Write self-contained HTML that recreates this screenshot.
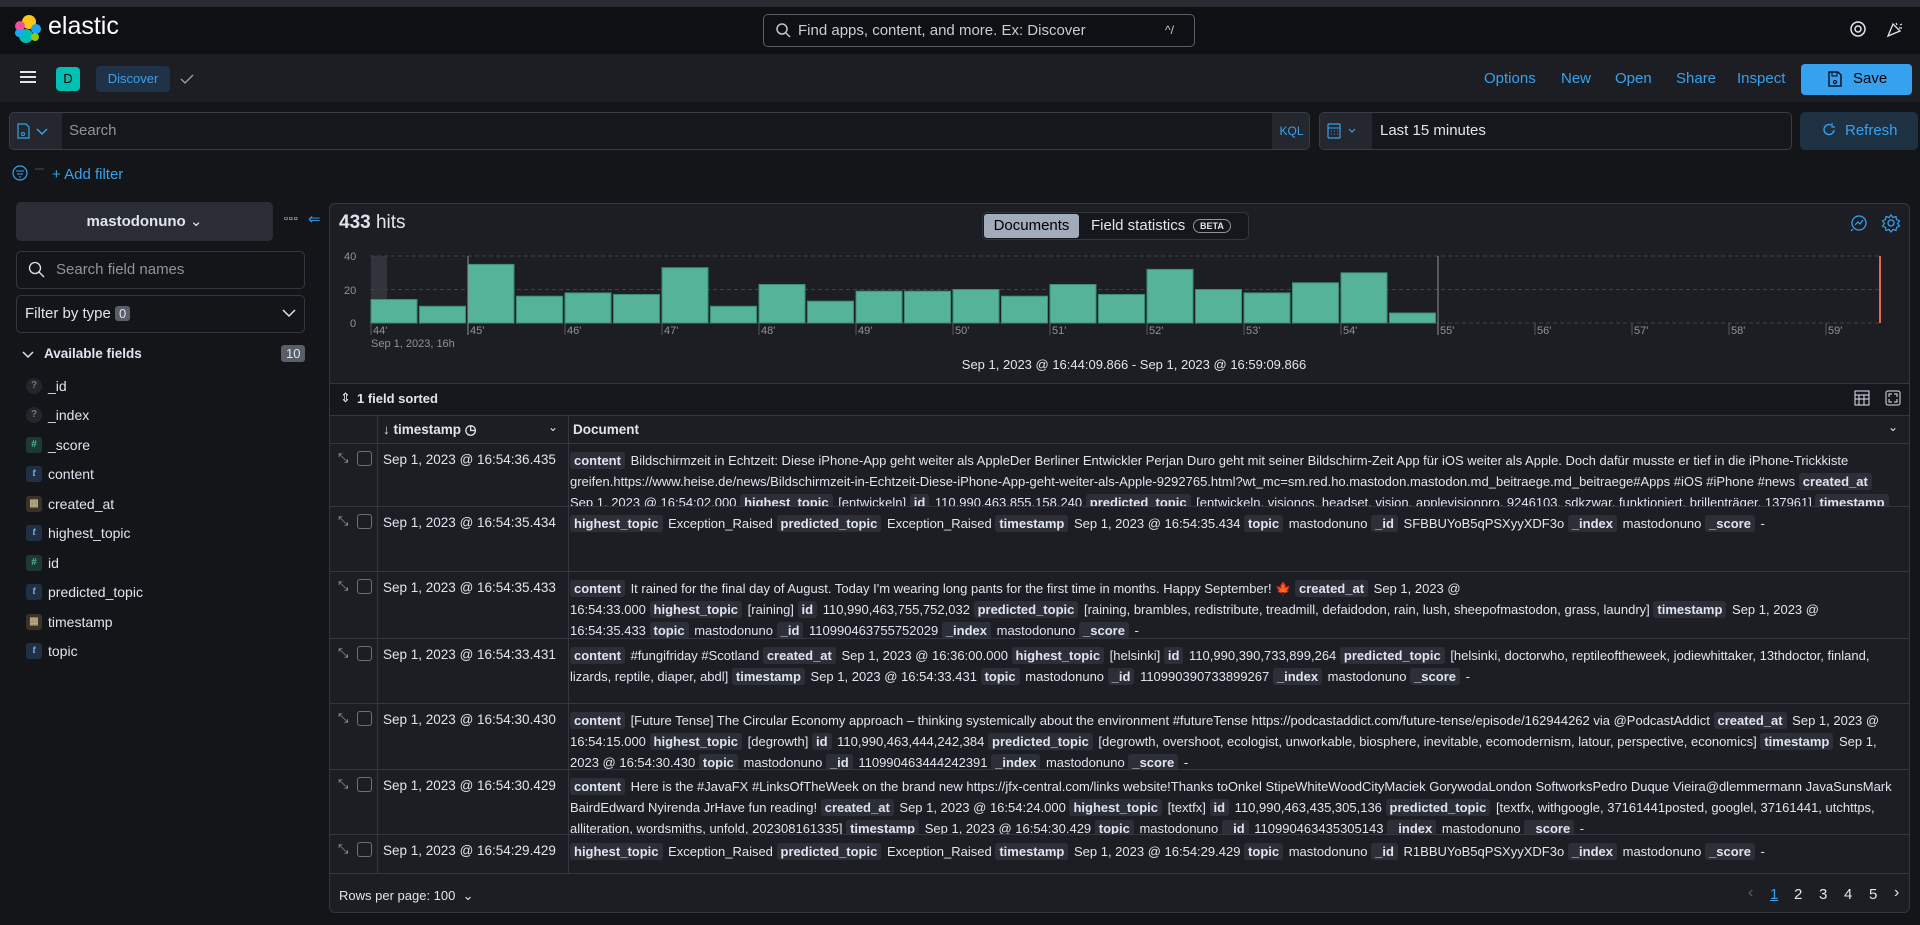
<!DOCTYPE html>
<html><head><meta charset="utf-8">
<style>
*{box-sizing:border-box;margin:0;padding:0}
body{width:1920px;height:925px;background:#141519;font-family:"Liberation Sans",sans-serif;color:#dfe5ef;position:relative;overflow:hidden;font-size:14px}
.a{position:absolute}
.blue{color:#36a2ef}
.tag{background:#2c2f38;color:#dfe5ef;font-weight:bold;padding:1px 4px;border-radius:3px;margin-right:2px}
.row{position:absolute;left:330px;width:1579px;border-top:1px solid #343741;overflow:hidden}
.row .ts{position:absolute;left:53px;top:8px;font-size:13.5px}
.row .doc{position:absolute;left:240px;top:6px;width:1322px;font-size:13px;line-height:21px}
.row .vl{position:absolute;left:238px;top:0;bottom:0;border-left:1px solid #343741}
.row .vl2{position:absolute;left:47px;top:0;bottom:0;border-left:1px solid #343741}
.cb{position:absolute;left:27px;top:7px;width:15px;height:15px;border:1px solid #6a717d;border-radius:3px}
.ex{position:absolute;left:8px;top:6px;color:#98a2b3;font-size:13px}
.fld{position:absolute;left:26px;font-size:14px;display:flex;align-items:center}
.fi{width:16px;height:16px;border-radius:3px;margin-right:6px;font-size:10px;text-align:center;line-height:16px;font-weight:bold}
</style></head><body>
<div class="a" style="left:0;top:0;width:1920px;height:7px;background:#2a2c34"></div>
<div class="a" style="left:0;top:7px;width:1920px;height:47px;background:#0f1014"></div>
<svg class="a" style="left:14px;top:14px" width="28" height="30" viewBox="0 0 28 30">
<circle cx="15" cy="8" r="7" fill="#fec514"/><circle cx="6" cy="12" r="5" fill="#f04e98"/><circle cx="22" cy="15" r="5" fill="#1ba9f5"/><circle cx="12" cy="22" r="7" fill="#00bfb3"/><circle cx="5" cy="19" r="4" fill="#1ba9f5"/><circle cx="21" cy="23" r="4" fill="#93c90e"/></svg>
<div class="a" style="left:48px;top:12px;font-size:25px;color:#fff">elastic</div>
<div class="a" style="left:763px;top:14px;width:432px;height:33px;border:1px solid #5a5e68;border-radius:5px;background:#0f1014"></div>
<svg class="a" style="left:775px;top:22px" width="16" height="16"><circle cx="7" cy="7" r="5" stroke="#c0c4cc" stroke-width="1.5" fill="none"/><line x1="11" y1="11" x2="15" y2="15" stroke="#c0c4cc" stroke-width="1.5"/></svg>
<div class="a" style="left:798px;top:22px;font-size:15px;color:#c8ccd4">Find apps, content, and more. Ex: Discover</div>
<div class="a" style="left:1165px;top:23px;font-size:12px;color:#c8ccd4">^/</div>
<svg class="a" style="left:1849px;top:20px" width="18" height="18"><circle cx="9" cy="9" r="7" stroke="#dfe5ef" stroke-width="1.5" fill="none"/><circle cx="9" cy="9" r="3" stroke="#dfe5ef" stroke-width="1.5" fill="none"/></svg>
<svg class="a" style="left:1885px;top:20px" width="18" height="18"><path d="M3 16 L8 4 L15 11 Z" stroke="#dfe5ef" stroke-width="1.3" fill="none"/><path d="M11 3l1 2M15 5l2-1M14 8h3" stroke="#dfe5ef" stroke-width="1.2"/></svg>
<div class="a" style="left:0;top:54px;width:1920px;height:48px;background:#1d1e24"></div>
<div class="a" style="left:20px;top:71px;width:16px;height:2px;background:#dfe5ef;box-shadow:0 5px 0 #dfe5ef,0 10px 0 #dfe5ef"></div>
<div class="a" style="left:56px;top:67px;width:24px;height:24px;background:#00bfb3;border-radius:4px;color:#000;text-align:center;line-height:24px;font-size:13px">D</div>
<div class="a" style="left:96px;top:66px;width:74px;height:26px;background:#1f3248;border-radius:4px;color:#36a2ef;text-align:center;line-height:26px;font-size:13px">Discover</div>
<svg class="a" style="left:180px;top:73px" width="14" height="12"><path d="M1 6l4 4 8-8" stroke="#98a2b3" stroke-width="1.3" fill="none"/></svg>
<div class="a blue" style="left:1484px;top:70px;font-size:15px">Options</div>
<div class="a blue" style="left:1561px;top:70px;font-size:15px">New</div>
<div class="a blue" style="left:1615px;top:70px;font-size:15px">Open</div>
<div class="a blue" style="left:1676px;top:70px;font-size:15px">Share</div>
<div class="a blue" style="left:1737px;top:70px;font-size:15px">Inspect</div>
<div class="a" style="left:1801px;top:64px;width:111px;height:31px;background:#36a2ef;border-radius:4px"></div>
<svg class="a" style="left:1828px;top:71px" width="14" height="16"><path d="M1 1h9l3 3v11H1z" stroke="#000" stroke-width="1.3" fill="none"/><rect x="4" y="1" width="5" height="4" stroke="#000" fill="none"/><circle cx="7" cy="11" r="1.5" stroke="#000" fill="none"/></svg>
<div class="a" style="left:1853px;top:70px;font-size:15px;color:#000">Save</div>
<div class="a" style="left:9px;top:112px;width:1301px;height:38px;border:1px solid #3a3d46;border-radius:5px;background:#16171c;overflow:hidden">
 <div class="a" style="left:0;top:0;width:52px;height:38px;background:#25272e"></div>
 <div class="a" style="left:1262px;top:0;width:39px;height:38px;background:#25272e;color:#36a2ef;font-size:12px;text-align:center;line-height:36px">KQL</div>
</div>
<svg class="a" style="left:17px;top:122px" width="34" height="18"><path d="M1 2h8l3 3v11H1z" stroke="#36a2ef" stroke-width="1.2" fill="none"/><circle cx="6" cy="12" r="1.5" stroke="#36a2ef" fill="none"/><path d="M20 7l5 5 5-5" stroke="#36a2ef" stroke-width="1.5" fill="none"/></svg>
<div class="a" style="left:69px;top:122px;font-size:15px;color:#8e939c">Search</div>
<div class="a" style="left:1319px;top:112px;width:473px;height:38px;border:1px solid #3a3d46;border-radius:5px;background:#16171c;overflow:hidden">
 <div class="a" style="left:0;top:0;width:52px;height:38px;background:#25272e"></div>
</div>
<svg class="a" style="left:1327px;top:121px" width="34" height="18"><rect x="1" y="3" width="12" height="14" rx="1" stroke="#36a2ef" stroke-width="1.2" fill="none"/><line x1="1" y1="7" x2="13" y2="7" stroke="#36a2ef"/><path d="M4 10h1M7 10h1M10 10h1M4 13h1M7 13h1M10 13h1" stroke="#36a2ef"/><path d="M22 8l3 3 3-3" stroke="#36a2ef" stroke-width="1.2" fill="none"/></svg>
<div class="a" style="left:1380px;top:122px;font-size:15px;color:#dfe5ef">Last 15 minutes</div>
<div class="a" style="left:1800px;top:112px;width:118px;height:38px;background:#1d3142;border-radius:5px"></div>
<svg class="a" style="left:1821px;top:122px" width="16" height="16"><path d="M13 8a5 5 0 1 1-3-5" stroke="#36a2ef" stroke-width="1.4" fill="none"/><path d="M11 1v4h3" stroke="#36a2ef" stroke-width="1.2" fill="none"/></svg>
<div class="a blue" style="left:1845px;top:122px;font-size:15px">Refresh</div>
<svg class="a" style="left:11px;top:164px" width="36" height="18"><circle cx="9" cy="9" r="7" stroke="#36a2ef" stroke-width="1.2" fill="none"/><path d="M5 7h8M6 10h6M8 13h2" stroke="#36a2ef"/><line x1="24" y1="5" x2="33" y2="5" stroke="#4a4d55"/></svg>
<div class="a blue" style="left:52px;top:166px;font-size:15px">+ Add filter</div>
<div class="a" style="left:16px;top:202px;width:257px;height:39px;background:#2b2d35;border-radius:5px;text-align:center;line-height:39px;font-weight:bold;font-size:15px">mastodonuno <span style="font-weight:normal">&#8964;</span></div>
<div class="a" style="left:284px;top:213px;font-size:11px;letter-spacing:1px;color:#dfe5ef">&#9643;&#9643;&#9643;</div>
<div class="a blue" style="left:308px;top:210px;font-size:15px">&#8656;</div>
<div class="a" style="left:16px;top:251px;width:289px;height:38px;border:1px solid #343741;border-radius:5px"></div>
<svg class="a" style="left:28px;top:261px" width="18" height="18"><circle cx="7" cy="7" r="5.5" stroke="#dfe5ef" stroke-width="1.3" fill="none"/><line x1="11" y1="11" x2="16" y2="16" stroke="#dfe5ef" stroke-width="1.3"/></svg>
<div class="a" style="left:56px;top:261px;font-size:15px;color:#8e939c">Search field names</div>
<div class="a" style="left:16px;top:295px;width:289px;height:38px;border:1px solid #343741;border-radius:5px"></div>
<div class="a" style="left:25px;top:305px;font-size:15px">Filter by type <span style="background:#5a5e68;padding:0 4px;border-radius:3px;font-size:13px">0</span></div>
<svg class="a" style="left:282px;top:308px" width="14" height="10"><path d="M1 2l6 6 6-6" stroke="#dfe5ef" stroke-width="1.5" fill="none"/></svg>
<svg class="a" style="left:22px;top:350px" width="12" height="10"><path d="M1 2l5 5 5-5" stroke="#dfe5ef" stroke-width="1.5" fill="none"/></svg>
<div class="a" style="left:44px;top:346px;font-size:13.5px;font-weight:bold">Available fields</div>
<div class="a" style="left:281px;top:345px;background:#5a5e68;padding:1px 5px;border-radius:3px;font-size:13px">10</div>
<div class="fld" style="top:378px"><div class="fi" style="background:#24262d;border-radius:8px;color:#777">?</div>_id</div>
<div class="fld" style="top:407px"><div class="fi" style="background:#24262d;border-radius:8px;color:#777">?</div>_index</div>
<div class="fld" style="top:437px"><div class="fi" style="background:#1c3a30;color:#54b399">#</div>_score</div>
<div class="fld" style="top:466px"><div class="fi" style="background:#1f3045;color:#7da7d9;font-style:italic">t</div>content</div>
<div class="fld" style="top:496px"><div class="fi" style="background:#3a3325;color:#b9a888">&#9638;</div>created_at</div>
<div class="fld" style="top:525px"><div class="fi" style="background:#1f3045;color:#7da7d9;font-style:italic">t</div>highest_topic</div>
<div class="fld" style="top:555px"><div class="fi" style="background:#1c3a30;color:#54b399">#</div>id</div>
<div class="fld" style="top:584px"><div class="fi" style="background:#1f3045;color:#7da7d9;font-style:italic">t</div>predicted_topic</div>
<div class="fld" style="top:614px"><div class="fi" style="background:#3a3325;color:#b9a888">&#9638;</div>timestamp</div>
<div class="fld" style="top:643px"><div class="fi" style="background:#1f3045;color:#7da7d9;font-style:italic">t</div>topic</div>
<div class="a" style="left:329px;top:203px;width:1581px;height:710px;background:#1d1e24;border:1px solid #343741;border-radius:6px"></div>
<div class="a" style="left:339px;top:212px;font-size:19px"><b>433</b> hits</div>
<div class="a" style="left:982px;top:212px;width:267px;height:28px;border:1px solid #343741;border-radius:5px;background:#16171c"></div>
<div class="a" style="left:984px;top:214px;width:95px;height:24px;background:#a2abba;border-radius:3px;color:#000;text-align:center;line-height:24px;font-size:15px">Documents</div>
<div class="a" style="left:1091px;top:217px;font-size:15px">Field statistics</div>
<div class="a" style="left:1193px;top:219px;font-size:9px;font-weight:bold;border:1px solid #8e939c;border-radius:9px;padding:1px 6px">BETA</div>
<svg class="a" style="left:1849px;top:213px" width="20" height="20"><circle cx="10" cy="10" r="7" stroke="#36a2ef" stroke-width="1.3" fill="none"/><path d="M6 12l3-3 2 2 3-4M4 16l-2 2" stroke="#36a2ef" stroke-width="1.2" fill="none"/></svg>
<svg class="a" style="left:1881px;top:213px" width="20" height="20"><circle cx="10" cy="10" r="3" stroke="#36a2ef" stroke-width="1.3" fill="none"/><path d="M10 2l2 2.5 3-1 .5 3 3 1.5-2 2.5 2 2.5-3 1.5-.5 3-3-1-2 2.5-2-2.5-3 1-.5-3-3-1.5 2-2.5-2-2.5 3-1.5.5-3 3 1z" stroke="#36a2ef" stroke-width="1.2" fill="none"/></svg>
<svg class="a" style="left:340px;top:245px" width="1560" height="110" font-family="Liberation Sans" font-size="11" fill="#8e939c">
<line x1="30" y1="11" x2="1541" y2="11" stroke="#3f424b" stroke-dasharray="4 3"/>
<line x1="30" y1="44.5" x2="1541" y2="44.5" stroke="#3f424b" stroke-dasharray="4 3"/>
<line x1="30" y1="78" x2="1541" y2="78" stroke="#3f424b" stroke-dasharray="4 3"/>
<text x="4" y="15">40</text><text x="4" y="49">20</text><text x="10" y="82">0</text>
<rect x="31" y="11" width="16" height="67" fill="#3a3d46" opacity="0.7"/>
<g fill="#54b399" stroke="#3d8c76">
<rect x="31" y="54.5" width="46" height="23.5"/><rect x="79.5" y="61.3" width="46" height="16.7"/><rect x="128" y="19.4" width="46" height="58.6"/><rect x="176.5" y="51.2" width="46" height="26.8"/><rect x="225" y="47.9" width="46" height="30.1"/><rect x="273.5" y="49.5" width="46" height="28.5"/><rect x="322" y="22.7" width="46" height="55.3"/><rect x="370.5" y="61.3" width="46" height="16.7"/><rect x="419" y="39.5" width="46" height="38.5"/><rect x="467.5" y="56.2" width="46" height="21.8"/><rect x="516" y="46.2" width="46" height="31.8"/><rect x="564.5" y="46.2" width="46" height="31.8"/><rect x="613" y="44.5" width="46" height="33.5"/><rect x="661.5" y="51.2" width="46" height="26.8"/><rect x="710" y="39.5" width="46" height="38.5"/><rect x="758.5" y="49.5" width="46" height="28.5"/><rect x="807" y="24.4" width="46" height="53.6"/><rect x="855.5" y="44.5" width="46" height="33.5"/><rect x="904" y="47.9" width="46" height="30.1"/><rect x="952.5" y="37.8" width="46" height="40.2"/><rect x="1001" y="27.8" width="46" height="50.2"/><rect x="1049.5" y="68" width="46" height="10"/>
</g>
<line x1="128" y1="11" x2="128" y2="90" stroke="#8e939c"/>
<line x1="1098" y1="11" x2="1098" y2="90" stroke="#8e939c"/>
<line x1="1540" y1="11" x2="1540" y2="78" stroke="#e7664c" stroke-width="2"/>
<g stroke="#555861"><line x1="31" y1="78" x2="31" y2="90"/><line x1="225" y1="78" x2="225" y2="90"/><line x1="322" y1="78" x2="322" y2="90"/><line x1="419" y1="78" x2="419" y2="90"/><line x1="516" y1="78" x2="516" y2="90"/><line x1="613" y1="78" x2="613" y2="90"/><line x1="710" y1="78" x2="710" y2="90"/><line x1="807" y1="78" x2="807" y2="90"/><line x1="904" y1="78" x2="904" y2="90"/><line x1="1001" y1="78" x2="1001" y2="90"/><line x1="1195" y1="78" x2="1195" y2="90"/><line x1="1292" y1="78" x2="1292" y2="90"/><line x1="1389" y1="78" x2="1389" y2="90"/><line x1="1486" y1="78" x2="1486" y2="90"/></g>
<text x="33" y="89">44'</text><text x="130" y="89">45'</text><text x="227" y="89">46'</text><text x="324" y="89">47'</text><text x="421" y="89">48'</text><text x="518" y="89">49'</text><text x="615" y="89">50'</text><text x="712" y="89">51'</text><text x="809" y="89">52'</text><text x="906" y="89">53'</text><text x="1003" y="89">54'</text><text x="1100" y="89">55'</text><text x="1197" y="89">56'</text><text x="1294" y="89">57'</text><text x="1391" y="89">58'</text><text x="1488" y="89">59'</text>
<text x="31" y="102">Sep 1, 2023, 16h</text>
</svg>
<div class="a" style="left:0;width:2268px;top:357px;text-align:center;font-size:13px">Sep 1, 2023 @ 16:44:09.866 - Sep 1, 2023 @ 16:59:09.866</div>
<div class="a" style="left:330px;top:383px;width:1579px;height:1px;background:#343741"></div>
<div class="a" style="left:330px;top:384px;width:1579px;height:44px;background:#16171c"></div>
<div class="a" style="left:340px;top:390px;font-size:13px">&#8661;</div>
<div class="a" style="left:357px;top:391px;font-size:13px;font-weight:bold">1 field sorted</div>
<svg class="a" style="left:1853px;top:389px" width="18" height="18"><rect x="2" y="2" width="14" height="14" stroke="#dfe5ef" fill="none"/><path d="M2 6h14M2 10h14M6 6v10M11 6v10" stroke="#dfe5ef"/></svg>
<svg class="a" style="left:1884px;top:389px" width="18" height="18"><rect x="2" y="2" width="14" height="14" rx="2" stroke="#dfe5ef" fill="none"/><path d="M5 8V5h3M13 8V5h-3M5 10v3h3M13 10v3h-3" stroke="#dfe5ef" fill="none"/></svg>
<div class="row" style="top:415px;height:28px;background:#1d1e24">
 <div class="vl2"></div><div class="vl"></div>
 <div class="a" style="left:53px;top:6px;font-size:13.5px;font-weight:bold">&#8595; timestamp &#9719;</div>
 <div class="a" style="left:218px;top:4px;font-size:12px">&#8964;</div>
 <div class="a" style="left:243px;top:6px;font-size:13.5px;font-weight:bold">Document</div>
 <div class="a" style="left:1558px;top:4px;font-size:12px">&#8964;</div>
</div>
<div class="row" style="top:443px;height:63px"><div class="vl2"></div><div class="vl"></div><div class="ex">&#10529;</div><div class="cb"></div><div class="ts">Sep 1, 2023 @ 16:54:36.435</div>
<div class="doc"><span class="tag">content</span> Bildschirmzeit in Echtzeit: Diese iPhone-App geht weiter als AppleDer Berliner Entwickler Perjan Duro geht mit seiner Bildschirm-Zeit App für iOS weiter als Apple. Doch dafür musste er tief in die iPhone-Trickkiste greifen.https://www.heise.de/news/Bildschirmzeit-in-Echtzeit-Diese-iPhone-App-geht-weiter-als-Apple-9292765.html?wt_mc=sm.red.ho.mastodon.mastodon.md_beitraege.md_beitraege#Apps #iOS #iPhone #news <span class="tag">created_at</span> Sep 1, 2023 @ 16:54:02.000 <span class="tag">highest_topic</span> [entwickeln] <span class="tag">id</span> 110,990,463,855,158,240 <span class="tag">predicted_topic</span> [entwickeln, visionos, headset, vision, applevisionpro, 9246103, sdkzwar, funktioniert, brillenträger, 137961] <span class="tag">timestamp</span> Sep …</div></div>
<div class="row" style="top:506px;height:65px"><div class="vl2"></div><div class="vl"></div><div class="ex">&#10529;</div><div class="cb"></div><div class="ts">Sep 1, 2023 @ 16:54:35.434</div>
<div class="doc"><span class="tag">highest_topic</span> Exception_Raised <span class="tag">predicted_topic</span> Exception_Raised <span class="tag">timestamp</span> Sep 1, 2023 @ 16:54:35.434 <span class="tag">topic</span> mastodonuno <span class="tag">_id</span> SFBBUYoB5qPSXyyXDF3o <span class="tag">_index</span> mastodonuno <span class="tag">_score</span> -</div></div>
<div class="row" style="top:571px;height:67px"><div class="vl2"></div><div class="vl"></div><div class="ex">&#10529;</div><div class="cb"></div><div class="ts">Sep 1, 2023 @ 16:54:35.433</div>
<div class="doc"><span class="tag">content</span> It rained for the final day of August. Today I'm wearing long pants for the first time in months. Happy September! 🍁 <span class="tag">created_at</span> Sep 1, 2023 @<br>16:54:33.000 <span class="tag">highest_topic</span> [raining] <span class="tag">id</span> 110,990,463,755,752,032 <span class="tag">predicted_topic</span> [raining, brambles, redistribute, treadmill, defaidodon, rain, lush, sheepofmastodon, grass, laundry] <span class="tag">timestamp</span> Sep 1, 2023 @ 16:54:35.433 <span class="tag">topic</span> mastodonuno <span class="tag">_id</span> 110990463755752029 <span class="tag">_index</span> mastodonuno <span class="tag">_score</span> -</div></div>
<div class="row" style="top:638px;height:65px"><div class="vl2"></div><div class="vl"></div><div class="ex">&#10529;</div><div class="cb"></div><div class="ts">Sep 1, 2023 @ 16:54:33.431</div>
<div class="doc"><span class="tag">content</span> #fungifriday #Scotland <span class="tag">created_at</span> Sep 1, 2023 @ 16:36:00.000 <span class="tag">highest_topic</span> [helsinki] <span class="tag">id</span> 110,990,390,733,899,264 <span class="tag">predicted_topic</span> [helsinki, doctorwho, reptileoftheweek, jodiewhittaker, 13thdoctor, finland, lizards, reptile, diaper, abdl] <span class="tag">timestamp</span> Sep 1, 2023 @ 16:54:33.431 <span class="tag">topic</span> mastodonuno <span class="tag">_id</span> 110990390733899267 <span class="tag">_index</span> mastodonuno <span class="tag">_score</span> -</div></div>
<div class="row" style="top:703px;height:66px"><div class="vl2"></div><div class="vl"></div><div class="ex">&#10529;</div><div class="cb"></div><div class="ts">Sep 1, 2023 @ 16:54:30.430</div>
<div class="doc"><span class="tag">content</span> [Future Tense] The Circular Economy approach – thinking systemically about the environment #futureTense https://podcastaddict.com/future-tense/episode/162944262 via @PodcastAddict <span class="tag">created_at</span> Sep 1, 2023 @ 16:54:15.000 <span class="tag">highest_topic</span> [degrowth] <span class="tag">id</span> 110,990,463,444,242,384 <span class="tag">predicted_topic</span> [degrowth, overshoot, ecologist, unworkable, biosphere, inevitable, ecomodernism, latour, perspective, economics] <span class="tag">timestamp</span> Sep 1, 2023 @ 16:54:30.430 <span class="tag">topic</span> mastodonuno <span class="tag">_id</span> 110990463444242391 <span class="tag">_index</span> mastodonuno <span class="tag">_score</span> -</div></div>
<div class="row" style="top:769px;height:65px"><div class="vl2"></div><div class="vl"></div><div class="ex">&#10529;</div><div class="cb"></div><div class="ts">Sep 1, 2023 @ 16:54:30.429</div>
<div class="doc"><span class="tag">content</span> Here is the #JavaFX #LinksOfTheWeek on the brand new https://jfx-central.com/links website!Thanks toOnkel StipeWhiteWoodCityMaciek GorywodaLondon SoftworksPedro Duque Vieira@dlemmermann JavaSunsMark BairdEdward Nyirenda JrHave fun reading! <span class="tag">created_at</span> Sep 1, 2023 @ 16:54:24.000 <span class="tag">highest_topic</span> [textfx] <span class="tag">id</span> 110,990,463,435,305,136 <span class="tag">predicted_topic</span> [textfx, withgoogle, 37161441posted, googlel, 37161441, utchttps, alliteration, wordsmiths, unfold, 202308161335] <span class="tag">timestamp</span> Sep 1, 2023 @ 16:54:30.429 <span class="tag">topic</span> mastodonuno <span class="tag">_id</span> 110990463435305143 <span class="tag">_index</span> mastodonuno <span class="tag">_score</span> -</div></div>
<div class="row" style="top:834px;height:40px;border-bottom:1px solid #343741"><div class="vl2"></div><div class="vl"></div><div class="ex">&#10529;</div><div class="cb"></div><div class="ts">Sep 1, 2023 @ 16:54:29.429</div>
<div class="doc"><span class="tag">highest_topic</span> Exception_Raised <span class="tag">predicted_topic</span> Exception_Raised <span class="tag">timestamp</span> Sep 1, 2023 @ 16:54:29.429 <span class="tag">topic</span> mastodonuno <span class="tag">_id</span> R1BBUYoB5qPSXyyXDF3o <span class="tag">_index</span> mastodonuno <span class="tag">_score</span> -</div></div>
<div class="a" style="left:339px;top:888px;font-size:13px">Rows per page: 100 &nbsp;&#8964;</div>
<div class="a" style="left:1748px;top:884px;font-size:16px;color:#5a5e68">&#8249;</div>
<div class="a blue" style="left:1770px;top:886px;font-size:15px;text-decoration:underline">1</div>
<div class="a" style="left:1794px;top:886px;font-size:15px">2</div>
<div class="a" style="left:1819px;top:886px;font-size:15px">3</div>
<div class="a" style="left:1844px;top:886px;font-size:15px">4</div>
<div class="a" style="left:1869px;top:886px;font-size:15px">5</div>
<div class="a" style="left:1894px;top:884px;font-size:16px">&#8250;</div>
</body></html>
